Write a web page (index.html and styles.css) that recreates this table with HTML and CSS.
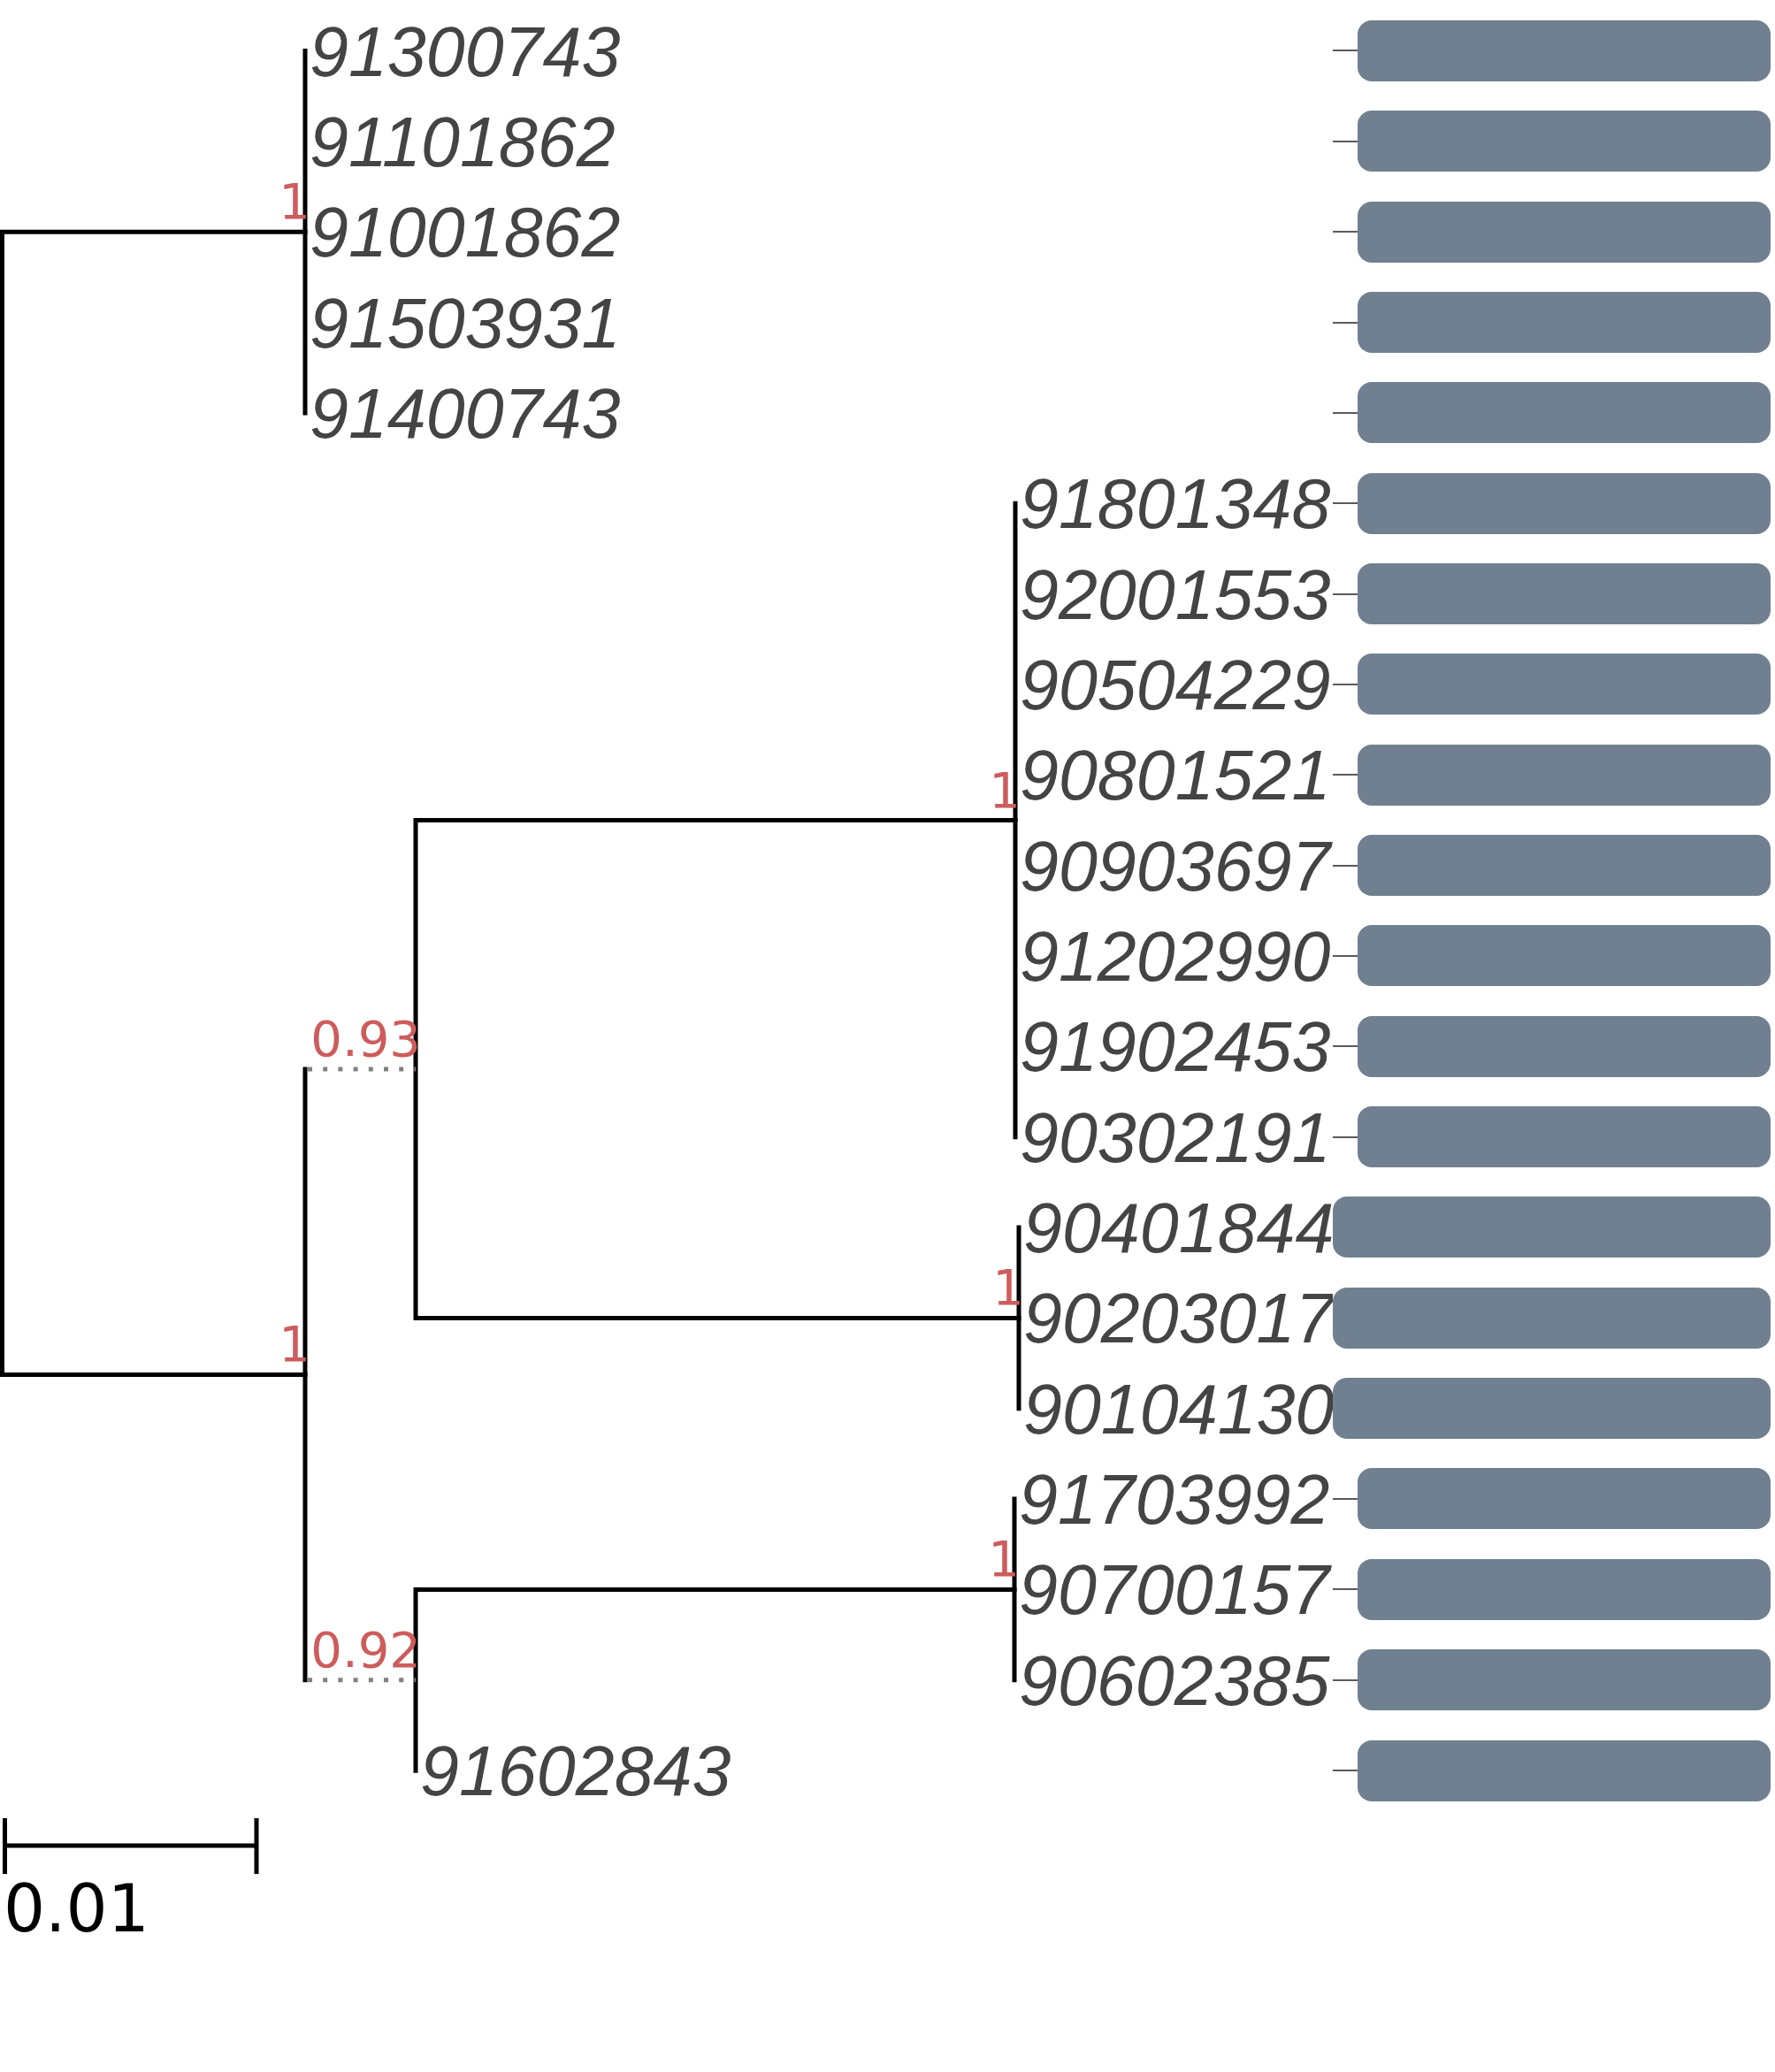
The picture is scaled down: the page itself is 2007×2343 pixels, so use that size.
FILE: index.html
```html
<!DOCTYPE html>
<html lang="en">
<head>
<meta charset="utf-8">
<title>Phylogenetic tree</title>
<link rel="stylesheet" href="styles.css">
</head>
<body>
<main class="figure">
  <svg class="tree" width="1507" height="2343" viewBox="0 0 1507 2343" xmlns="http://www.w3.org/2000/svg">
    <g class="branches">
      <path d="M345 262.2 H2.5 V1554.4 H345"/>
      <path d="M345 57.5 V466.9"/>
      <path d="M345 1208.9 V1899.8"/>
      <path d="M1148 927.5 H470 V1490.4 H1152"/>
      <path d="M1148 569.25 V1285.7"/>
      <path d="M1152 1388.05 V1592.75"/>
      <path d="M1147 1797.45 H470 V2002.15"/>
      <path d="M1147 1695.1 V1899.8"/>
    </g>
    <g class="dotted">
      <path d="M348 1208.9 H470"/>
      <path d="M348 1899.8 H470"/>
    </g>
    <g class="support">
      <text x="351" y="247.2">1</text>
      <text x="351" y="1539.4">1</text>
      <text x="476" y="1193.9">0.93</text>
      <text x="476" y="1884.8">0.92</text>
      <text x="1154" y="912.5">1</text>
      <text x="1158" y="1475.4">1</text>
      <text x="1153" y="1782.45">1</text>
    </g>
    <g class="leaf">
      <text x="350" y="85.5">91300743</text>
      <text x="350" y="187.85">91101862</text>
      <text x="350" y="290.2">91001862</text>
      <text x="350" y="392.55">91503931</text>
      <text x="350" y="494.9">91400743</text>
      <text x="1153" y="597.25">91801348</text>
      <text x="1153" y="699.6">92001553</text>
      <text x="1153" y="801.95">90504229</text>
      <text x="1153" y="904.3">90801521</text>
      <text x="1153" y="1006.65">90903697</text>
      <text x="1153" y="1109">91202990</text>
      <text x="1153" y="1211.35">91902453</text>
      <text x="1153" y="1313.7">90302191</text>
      <text x="1157" y="1416.05">90401844</text>
      <text x="1157" y="1518.4">90203017</text>
      <text x="1157" y="1620.75">90104130</text>
      <text x="1152" y="1723.1">91703992</text>
      <text x="1152" y="1825.45">90700157</text>
      <text x="1152" y="1927.8">90602385</text>
      <text x="475" y="2030.15">91602843</text>
    </g>
    <g class="scale">
      <path d="M5.5 2056 V2119 M5.5 2087 H290 M290 2056 V2119"/>
      <text x="4" y="2184">0.01</text>
    </g>
  </svg>
  <section class="tracks">
    <div class="row"><span class="tick"></span><span class="bar"></span></div>
    <div class="row"><span class="tick"></span><span class="bar"></span></div>
    <div class="row"><span class="tick"></span><span class="bar"></span></div>
    <div class="row"><span class="tick"></span><span class="bar"></span></div>
    <div class="row"><span class="tick"></span><span class="bar"></span></div>
    <div class="row"><span class="tick"></span><span class="bar"></span></div>
    <div class="row"><span class="tick"></span><span class="bar"></span></div>
    <div class="row"><span class="tick"></span><span class="bar"></span></div>
    <div class="row"><span class="tick"></span><span class="bar"></span></div>
    <div class="row"><span class="tick"></span><span class="bar"></span></div>
    <div class="row"><span class="tick"></span><span class="bar"></span></div>
    <div class="row"><span class="tick"></span><span class="bar"></span></div>
    <div class="row"><span class="tick"></span><span class="bar"></span></div>
    <div class="row row-long"><span class="bar"></span></div>
    <div class="row row-long"><span class="bar"></span></div>
    <div class="row row-long"><span class="bar"></span></div>
    <div class="row"><span class="tick"></span><span class="bar"></span></div>
    <div class="row"><span class="tick"></span><span class="bar"></span></div>
    <div class="row"><span class="tick"></span><span class="bar"></span></div>
    <div class="row"><span class="tick"></span><span class="bar"></span></div>
  </section>
</main>
</body>
</html>
```

FILE: styles.css
```css
html, body {
  margin: 0;
  padding: 0;
  background: #ffffff;
}

.figure {
  display: flex;
  align-items: flex-start;
  width: 2007px;
  height: 2343px;
}

.tree {
  display: block;
  flex: 0 0 1507px;
}

.branches path {
  fill: none;
  stroke: #000000;
  stroke-width: 5;
  stroke-linecap: square;
  stroke-linejoin: miter;
}

.dotted path {
  fill: none;
  stroke: #808080;
  stroke-width: 5;
  stroke-dasharray: 5 12.2;
}

.support text {
  font-family: "DejaVu Sans", sans-serif;
  font-size: 56px;
  fill: #cd5c5c;
  text-anchor: end;
}

.leaf text {
  font-family: "Liberation Sans", Arial, sans-serif;
  font-style: italic;
  font-size: 79px;
  fill: #444444;
}

.scale path {
  fill: none;
  stroke: #000000;
  stroke-width: 5;
}

.scale text {
  font-family: "DejaVu Sans", sans-serif;
  font-size: 74px;
  fill: #000000;
}

.tracks {
  display: flex;
  flex-direction: column;
  width: 495px;
  padding-top: 6.3px;
}

.row {
  display: flex;
  align-items: center;
  height: 102.35px;
}

.tick {
  flex: 0 0 28px;
  height: 2px;
  background: #5a5a5a;
}

.bar {
  flex: 1 1 auto;
  height: 69px;
  border-radius: 16px;
  background: #708090;
}
```
